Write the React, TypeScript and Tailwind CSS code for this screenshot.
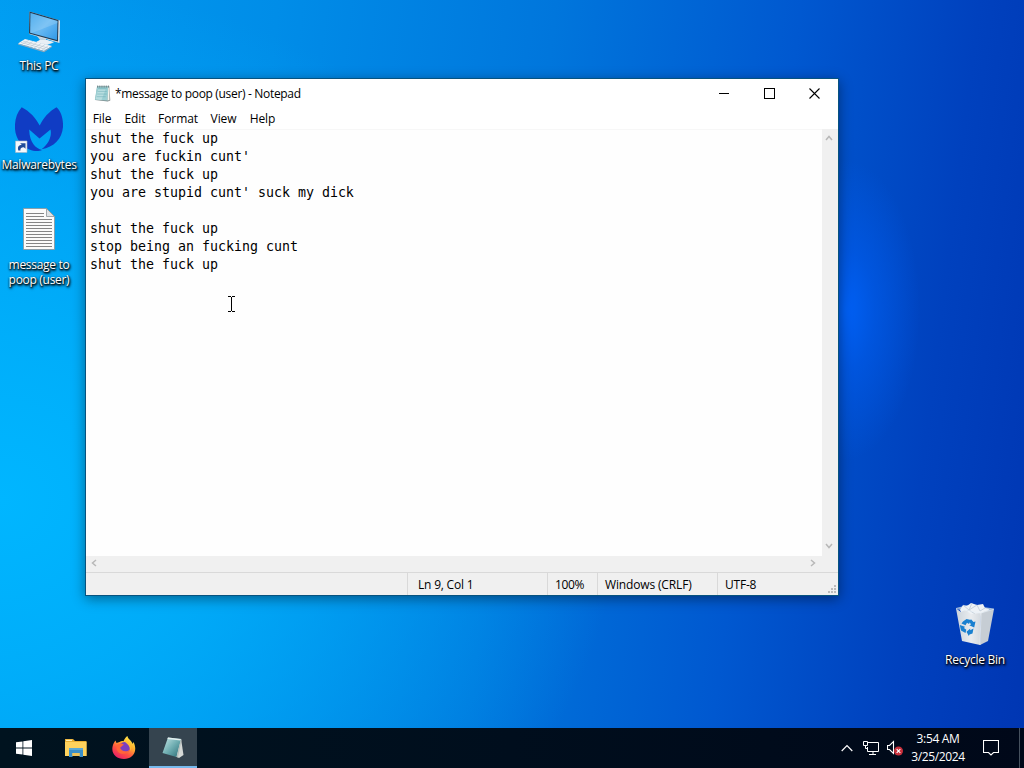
import clsx from 'clsx';
import React from 'react';

const menuItems = [
  { label: 'File', width: 'w-8' },
  { label: 'Edit', width: 'w-[34px]' },
  { label: 'Format', width: 'w-[52px]' },
  { label: 'View', width: 'w-[39px]' },
  { label: 'Help', width: 'w-[39px]' },
];

const lines = [
  'shut the fuck up',
  "you are fuckin cunt'",
  'shut the fuck up',
  "you are stupid cunt' suck my dick",
  '',
  'shut the fuck up',
  'stop being an fucking cunt',
  'shut the fuck up',
];

const ThisPcIcon = () => (
  <svg className="w-12 h-12" viewBox="0 0 48 48">
    <defs>
      <linearGradient id="screen" x1="0" x2="1" y1="0" y2="1">
        <stop offset="0" stopColor="#2b9be8" />
        <stop offset="0.5" stopColor="#68b9f3" />
        <stop offset="1" stopColor="#2f98e8" />
      </linearGradient>
    </defs>
    <path d="M22 30 L31 31.5 L31 34 L39 36.5 L32 39 L21 36.5 L25 34Z" fill="#c5d3df" />
    <path d="M21 36 L32 38.5 L39 36 L32 34 L25 34Z" fill="#e8eff5" />
    <path d="M14.5 5.5 L45 14.5 L44.5 37 L14 28Z" fill="#d9e2ea" />
    <path d="M14.5 5.5 L43.5 14 L43 35.5 L14 27.5Z" fill="#233b52" />
    <path d="M15.500 7 L42.500 15 L42 34 L15.200 26.700Z" fill="url(#screen)" />
    <path d="M15.500 7 L42.500 15 L42.400 17 L17 27 L15.200 26.700Z" fill="#b4defa" opacity=".3" />
    <path d="M10 33 L37 40 L29 45 L3 37.500Z" fill="#eff4f8" />
    <path d="M3 37.500 L29 45 L37 40 L37 41 L29 46.300 L3 38.500Z" fill="#91a7b8" />
    <path
      d="M8 35 L33 42 M5.800 36.300 L31 43.500 M14 34.200 L7 38.500 M18 35.300 L11 39.700 M22 36.400 L15 41 M26 37.500 L19 42 M30 38.500 L23 43.200 M33.500 39.500 L27 44.200"
      stroke="#aabac7"
      strokeWidth=".5"
    />
  </svg>
);

const MalwarebytesIcon = () => (
  <svg className="w-12 h-12" viewBox="0 0 48 48">
    <path
      d="M6.700 2.300 C1.500 8 -.5 16 0 24 C.8 34 7 42 14.500 44.500 C19 46.500 24 46.500 27 45 C21 43.500 14.500 38 14.200 24.500 L24.500 33.500 L35.500 24.500 C37 31 34 39 26.500 44.300 C39 42 47 34 48 22 C48.300 14 46.500 7 41.500 2.300 C34 6.500 28.500 13 24.700 20.500 C20.500 13 15 6.500 6.700 2.300Z"
      fill="#103cc4"
    />
    <path d="M.5 36 H12 V47.500 H.5Z" fill="#f5f8fc" stroke="#a7b5c2" strokeWidth=".6" />
    <path d="M3.300 45.500 C2.300 41.500 3.800 40 6.800 40 L5.200 38.300 H10.500 V43.700 L8.800 42.200 C6 42.200 5 43.500 5.500 45.500Z" fill="#214c99" />
  </svg>
);

const TextFileIcon = () => (
  <svg className="w-12 h-12" viewBox="0 0 48 48">
    <path d="M8.500 3.500 H31.500 L39.500 11.500 V44.500 H8.500Z" fill="#fbfbfa" stroke="#8d9397" strokeWidth=".8" />
    <path d="M31.500 3.500 V11.500 H39.500Z" fill="#dfe3e5" stroke="#8d9397" strokeWidth=".8" />
    <path
      d="M11 8.500 H29 M11 11.500 H29 M11 14.500 H37 M11 17.500 H37 M11 20.500 H37 M11 23.500 H37 M11 26.500 H37 M11 29.500 H37 M11 32.500 H37 M11 35.500 H37 M11 38.500 H37 M11 41.500 H37"
      stroke="#858585"
    />
  </svg>
);

const RecycleBinIcon = () => (
  <svg className="w-12 h-12" viewBox="0 0 48 48">
    <defs>
      <linearGradient id="bin" x1="0" x2="1">
        <stop offset="0" stopColor="#cbd4dc" />
        <stop offset="0.6" stopColor="#e9ecef" />
        <stop offset="1" stopColor="#d3d9df" />
      </linearGradient>
    </defs>
    <path d="M5 8 L17 5 L43 8.500 L31 13Z" fill="#9eb8d8" />
    <path d="M9 10 L12 5 L16 6 L20 3 L26 5 L32 4 L34 8 L38 9 L36 15 L12 16Z" fill="#eef2f6" />
    <path d="M12 5 L18 10 L21 3 M18 10 L26 5 L29 11 L34 8 M12 13 L18 10 L24 14" fill="none" stroke="#bcc9d6" strokeWidth=".8" />
    <path d="M5 8.500 L10 12 L14 10 L20 14 L30 13 L29 45 L11 41Z" fill="url(#bin)" />
    <path d="M30 13 L35 11 L43 9 L37 41 L29 45Z" fill="#c6cdd4" />
    <path d="M5 8.500 L30 13 L43 9" fill="none" stroke="#e8f0f8" strokeWidth=".7" />
    <path d="M30 13 L29 45" stroke="#e9edf1" strokeWidth=".8" />
    <g fill="#1980d0">
      <path d="M12 21.500 L15.500 19 L20 20 L18 24 L16 22.800 L14.500 25.300 L10.500 23.500Z" />
      <path d="M20 19.300 L22.500 22 L24.500 21.500 L23.200 27.500 L18.300 25.300 L20 24.500 L18.200 21.500Z" />
      <path d="M8.800 25 L14 26.800 L13 28 L15.300 29.800 L14.500 33 L10 30.500Z" />
      <path d="M22.500 28.500 L21.500 33.500 L18.500 34.500 L17.800 36 L15.500 31.800 L19.300 28.500 L19.200 30.300Z" />
    </g>
  </svg>
);

const NotepadIcon: React.FC<{ className?: string }> = ({ className }) => (
  <svg className={className} viewBox="0 0 16 16">
    <path d="M3 1.500 H14.500 L15.300 14.500 L13 15.500 L1 14Z" fill="#7d8b8c" />
    <path d="M2.800 1.500 H13.500 L12.800 14.500 L.8 13.800Z" fill="#9bcfd3" />
    <path d="M4 4 H11 L7 14 L1.500 13.500Z" fill="#c7e7e6" opacity=".65" />
    <path d="M4 3.500 H12 M3.500 6 H12 M3 8.500 H12 M2.500 11 H11" stroke="#6caeb5" strokeWidth=".5" />
    <path d="M13.500 1.500 L12.800 14.500 L14.500 14 V2Z" fill="#f5f5ee" />
    <path d="M3.500 .5 V2.500 M5.500 .5 V2.500 M7.500 .5 V2.500 M9.500 .5 V2.500 M11.500 .5 V2.500 M13.500 .5 V2.500" stroke="#536b70" strokeWidth=".8" />
  </svg>
);

const TaskNotepadIcon = () => (
  <svg className="w-6 h-6" viewBox="0 0 24 24">
    <defs>
      <linearGradient id="pad" x1="0" x2="1" y1="0" y2="1">
        <stop offset="0" stopColor="#c7e7e7" />
        <stop offset="0.5" stopColor="#70aeb2" />
        <stop offset="1" stopColor="#296b75" />
      </linearGradient>
    </defs>
    <path d="M20 2.500 L22.500 19 L18 22 L14 20Z" fill="#d5d9d6" />
    <path d="M7 1.500 L20 3 L15.500 21 L1.500 17Z" fill="url(#pad)" />
    <path d="M7 1.500 L20 3 L19.600 4.500 L6.400 3Z" fill="#e4eeee" />
    <path d="M20 3 L15.500 21 L17 21.500 L20.500 4Z" fill="#b4bfbc" />
  </svg>
);

const FolderIcon = () => (
  <svg className="w-6 h-6" viewBox="0 0 24 24">
    <path d="M1 3 H9 L11 5 H22.500 V20 H1Z" fill="#e9ae32" />
    <path d="M1 6 H22.500 V20 H1Z" fill="#ffd25c" />
    <path d="M2 3.800 H8 V5 H2Z" fill="#fff0b3" />
    <path d="M5 12 H19 V21 H15.500 V17 H8.500 V21 H5Z" fill="#3b8fc7" />
    <path d="M5 12 H19 V14 H5Z" fill="#5ca8d3" />
    <path d="M8.500 17 H15.500 V20 H8.500Z" fill="#efc35a" />
  </svg>
);

const FirefoxIcon = () => (
  <svg className="w-6 h-6" viewBox="0 0 24 24">
    <defs>
      <linearGradient id="fox" x1=".8" x2=".2" y1="0" y2="1">
        <stop offset="0" stopColor="#fff04f" />
        <stop offset="0.35" stopColor="#ffb22e" />
        <stop offset="0.65" stopColor="#ff5240" />
        <stop offset="1" stopColor="#e5196c" />
      </linearGradient>
    </defs>
    <path
      d="M3.500 4.500 L4.500 7 L7.500 6 C9 4.800 10.500 4.800 11.500 5.200 C12.500 2.500 14 1 15.500 0 C15.500 3 20 4.500 20.500 8 L21.500 6 C26.500 16 20 23 12 23 C4.500 23 -1 18 .6 10.500 C1 8 2.200 6 3.500 4.500Z"
      fill="url(#fox)"
    />
    <circle cx="12.500" cy="11.500" fill="#7a3fc0" r="5.500" />
    <path d="M5 9 C8 6.500 11 7.500 12 9 C9.500 9.500 9.500 11.500 8 11.500 C9 15 14 17 18 13.500 C16 19.500 5 19.500 4.500 12Z" fill="#ff6539" />
    <path d="M12 5 C17 5 21 10 18 15 C18.500 10 15.500 8 12 5Z" fill="#ffbd33" />
  </svg>
);

interface DesktopIconProps {
  children: React.ReactNode;
  label: React.ReactNode;
  className: string;
  tracking?: string;
}

const DesktopIcon: React.FC<DesktopIconProps> = ({ children, label, className, tracking }) => (
  <div className={clsx('absolute flex w-[78px] flex-col items-center', className)}>
    {children}
    <span
      className={clsx(
        'mt-1 whitespace-nowrap text-center text-[12px] leading-[15px] text-white [text-shadow:0_1px_2px_#000,1px_1px_2px_#000,1px_2px_3px_rgba(0,0,0,0.7)]',
        tracking,
      )}
    >
      {label}
    </span>
  </div>
);

const ScrollArrow: React.FC<{ d: string }> = ({ d }) => (
  <svg className="h-2 w-2" fill="none" viewBox="0 0 8 8">
    <path d={d} stroke="#b8b8b8" strokeWidth="1.500" />
  </svg>
);

const NotepadWindow = () => (
  <section className="absolute left-[85px] top-[78px] flex h-[518px] w-[754px] flex-col border border-[#07537f] bg-white text-[12px] text-black shadow-[0_3px_12px_rgba(0,0,0,0.42)]">
    <header className="flex h-[30px] shrink-0 items-center pl-2">
      <NotepadIcon className="mb-0.5 h-[17px] w-[17px]" />
      <h1 className="ml-1 flex-1 whitespace-nowrap tracking-[-0.32px]">*message to poop (user) - Notepad</h1>
      <div className="flex h-[29px] self-start">
        <button aria-label="Minimize" className="flex w-[46px] items-center justify-center">
          <span className="h-px w-2.5 bg-black" />
        </button>
        <button aria-label="Maximize" className="flex w-11 items-center justify-center">
          <span className="h-[11px] w-[11px] border border-black" />
        </button>
        <button aria-label="Close" className="mr-px flex w-[46px] items-center justify-center">
          <svg className="h-[11px] w-[11px]" viewBox="0 0 11 11">
            <path d="M.5 .5 L10.500 10.500 M10.500 .5 L.5 10.500" stroke="#000" strokeWidth="1.100" />
          </svg>
        </button>
      </div>
    </header>

    <nav className="flex h-5 shrink-0 items-center">
      {menuItems.map((item) => (
        <span className={clsx('whitespace-nowrap text-center tracking-[-0.1px]', item.width)} key={item.label}>
          {item.label}
        </span>
      ))}
    </nav>

    <div className="flex min-h-0 flex-1">
      <div className="flex-1 border-t border-[#f7f7f7] bg-[#fefefe] pl-1 font-['DejaVu_Sans_Mono',monospace] text-[13.290px] leading-[18px]">
        {lines.map((line, index) => (
          <p className="h-[18px] whitespace-pre" key={index}>
            {line}
          </p>
        ))}
      </div>
      <div className="flex w-4 flex-col items-center justify-between bg-[#f0f0f0] pt-[5px] pr-0.5 pb-1.5">
        <ScrollArrow d="M1 6 L4 2.500 L7 6" />
        <ScrollArrow d="M1 2 L4 5.500 L7 2" />
      </div>
    </div>

    <div className="flex h-4 shrink-0 items-center justify-between bg-[#f0f0f0] pr-[21px] pb-0.5 pl-1">
      <ScrollArrow d="M6 1 L2.500 4 L6 7" />
      <ScrollArrow d="M2 1 L5.500 4 L2 7" />
    </div>

    <footer className="relative flex h-[23px] shrink-0 border-t border-[#d9d9d9] bg-[#f0f0f0] leading-[23px] whitespace-nowrap">
      <div className="w-[321px]" />
      <div className="w-[140px] border-l border-[#d9d9d9] pl-2.5 tracking-[-0.2px]">Ln 9, Col 1</div>
      <div className="w-[50px] border-l border-[#d9d9d9] pl-[7px] tracking-[-0.4px]">100%</div>
      <div className="w-[120px] border-l border-[#d9d9d9] pl-[7px] tracking-[-0.15px]">Windows (CRLF)</div>
      <div className="flex-1 border-l border-[#d9d9d9] pl-[7px] tracking-[-0.2px]">UTF-8</div>
      <svg className="absolute bottom-0.5 right-0.5 h-2 w-2" viewBox="0 0 8 8">
        <path d="M6 0h2v2h-2z M3 3h2v2h-2z M6 3h2v2h-2z M0 6h2v2h-2z M3 6h2v2h-2z M6 6h2v2h-2z" fill="#bcbcbc" />
      </svg>
    </footer>
  </section>
);

const Taskbar = () => (
  <footer className="flex h-10 shrink-0 items-stretch bg-[linear-gradient(90deg,#00131f,#000e1d_50%,#000819)] text-white">
    <div className="flex w-12 items-center justify-center">
      <svg className="size-4" fill="#fff" viewBox="0 0 16 16">
        <path d="M0 2.300 L6.500 1.400 V7.600 H0Z M7.300 1.300 L16 0 V7.600 H7.300Z M0 8.400 H6.500 V14.600 L0 13.700Z M7.300 8.400 H16 V16 L7.300 14.700Z" />
      </svg>
    </div>
    <div className="flex w-[51px] items-center justify-center pl-1">
      <FolderIcon />
    </div>
    <div className="flex w-[50px] items-center justify-center">
      <FirefoxIcon />
    </div>
    <div className="flex w-12 items-center justify-center border-b-2 border-[#76b9ed] bg-[#35444f] pt-0.5">
      <TaskNotepadIcon />
    </div>

    <div className="ml-auto flex items-center">
      <svg className="h-2 w-3" fill="none" viewBox="0 0 12 8">
        <path d="M.7 7 L6 1.500 L11.300 7" stroke="#fff" strokeWidth="1.200" />
      </svg>
      <svg className="ml-2.5 h-[14px] w-4" fill="none" viewBox="0 0 16 14">
        <path d="M5 1.500 H15.500 V10.500 H4.500 V6 M10 10.500 V13.500 M6 13.500 H13 M.5 .5 H4.500 V4.500 H.5Z M2.500 4.500 V7.500 H4.500" stroke="#fff" />
      </svg>
      <svg className="ml-2 h-4 w-4" fill="none" viewBox="0 0 16 16">
        <path d="M.5 5.500 H2.500 L6.500 1.500 V13.500 L2.500 9.500 H.5Z" stroke="#fff" strokeWidth="1.100" />
        <circle cx="11.500" cy="11" fill="#c9303c" r="4.500" />
        <path d="M9.700 9.200 L13.300 12.800 M13.300 9.200 L9.700 12.800" stroke="#fff" strokeWidth="1.200" />
      </svg>
      <div className="ml-0.5 w-[66px] whitespace-nowrap text-center text-[12px] leading-[18px] tracking-[-0.35px]">
        <div>3:54 AM</div>
        <div>3/25/2024</div>
      </div>
      <svg className="ml-3 h-4 w-4" fill="none" viewBox="0 0 16 16">
        <path d="M.5 .5 H15.500 V12.500 H10.500 L8 15 L5.500 12.500 H.5Z" stroke="#fff" strokeWidth="1.100" />
      </svg>
      <div className="ml-5 h-full w-[5px] border-l border-[#46515e]" />
    </div>
  </footer>
);

export default function App() {
  return (
    <div className="flex h-[768px] w-[1024px] flex-col overflow-hidden bg-[#0036b5] font-['Open_Sans','Noto_Sans',sans-serif]">
      <main className="relative flex-1 bg-[radial-gradient(ellipse_75px_150px_at_845px_310px,#0060f5_0%,#005cee99_40%,#0050d800_100%),radial-gradient(ellipse_620px_520px_at_0px_500px,#00b6ff_0%,#00b2fccc_35%,#00a5f500_100%),linear-gradient(97deg,#009cf1_0%,#008de8_25%,#0076dc_50%,#0058d0_72%,#0041be_88%,#0036b3_100%)]">
        <DesktopIcon className="left-0 top-1.5" label="This PC" tracking="tracking-[-0.25px]">
          <ThisPcIcon />
        </DesktopIcon>
        <DesktopIcon className="left-0 top-[105px]" label="Malwarebytes" tracking="tracking-[-0.25px]">
          <MalwarebytesIcon />
        </DesktopIcon>
        <DesktopIcon
          className="left-0 top-[205px]"
          label={
            <>
              message to
              <br />
              poop (user)
            </>
          }
          tracking="tracking-[-0.3px]"
        >
          <TextFileIcon />
        </DesktopIcon>
        <DesktopIcon className="left-[936px] top-[600px]" label="Recycle Bin" tracking="tracking-[-0.25px]">
          <RecycleBinIcon />
        </DesktopIcon>

        <NotepadWindow />

        {/* text cursor */}
        <svg className="absolute left-[227px] top-[296px] h-4 w-[9px]" fill="none" viewBox="0 0 9 16">
          <path d="M1 .5 H4 M5 .5 H8 M4.500 1 V15 M1 15.500 H4 M5 15.500 H8" stroke="#000" />
        </svg>
      </main>
      <Taskbar />
    </div>
  );
}
